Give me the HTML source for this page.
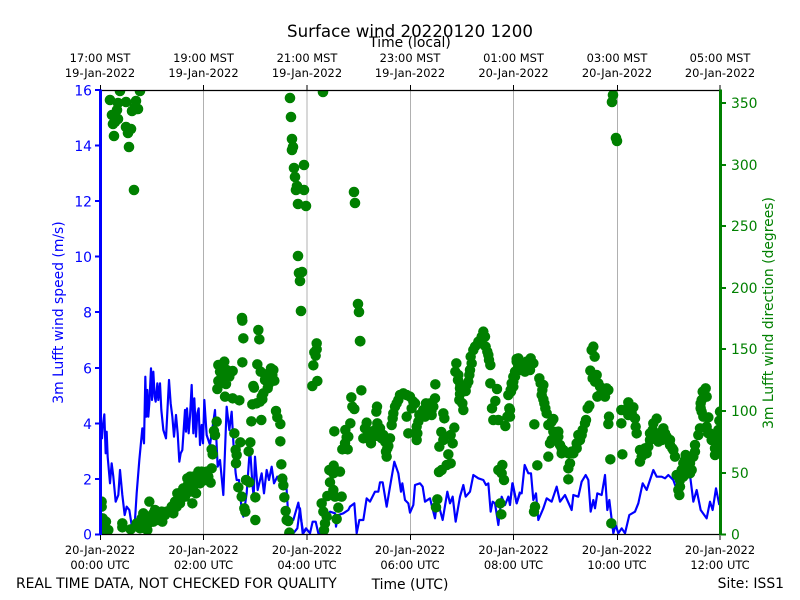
<!DOCTYPE html>
<html><head><meta charset="utf-8"><style>
html,body{margin:0;padding:0;background:#fff;width:800px;height:600px;overflow:hidden}
svg{display:block}
text{font-family:"DejaVu Sans",sans-serif;fill:#000}
.s{font-size:11.45px;text-anchor:middle}
.l{font-size:13.9px;fill:#00f;text-anchor:end}
.r{font-size:13.9px;fill:#008000}
</style></head><body>
<svg width="800" height="600" viewBox="0 0 800 600" xmlns="http://www.w3.org/2000/svg">
<defs><clipPath id="c"><rect x="100" y="90" width="620" height="444.5"/></clipPath></defs>
<rect width="800" height="600" fill="#fff"/>
<path d="M203.5 90V534M307 90V534M410.5 90V534M513.5 90V534M617.5 90V534" stroke="#b0b0b0" stroke-width="1" fill="none"/>
<g clip-path="url(#c)">
<g transform="translate(90,320) scale(.33333)" fill="none" stroke="#00f" stroke-width="6.5" stroke-linejoin="round">
<polyline points="31,310 36,355 38,320 43,283 47,400 50,335 53,410 60,490 65,430 70,470 77,545 85,525 90,450 97,525 104,585 110,560 118,570 125,615 135,600 140,520 148,420 157,325 162,370 166,170 169,290 172,210 175,290 178,250 183,145 186,240 190,155 194,230 197,245 202,190 205,240 210,190 214,270 220,330 228,355 237,180 242,250 247,290 252,350 258,285 263,340 268,425 272,400 277,390 285,270 288,335 291,265 296,340 300,290 305,195 310,340 313,235 318,350 322,280 326,265 330,375 335,315 339,370 343,240 350,345 360,375 375,270 383,440 390,420 400,525 410,260 418,330 425,275 432,400 437,460 440,480 447,480 455,570 460,590 470,520 475,450 480,380 487,490 491,530 495,410 503,510 515,460 522,520 530,450 537,480 545,440 552,490 562,470 570,480 588,480 595,590 610,600 625,548 640,640 650,625"/>
</g>
<g transform="translate(300,320) scale(.33333)" fill="none" stroke="#00f" stroke-width="6.5" stroke-linejoin="round">
<polyline points="-30,625 -20,640 -8,625 0,565 8,640 18,625 30,640 38,605 47,605 55,640 70,640 80,590 90,575 105,580 108,620 115,585 130,580 145,570 150,560 163,550 170,640 178,600 190,600 200,535 210,545 225,515 235,515 240,487 248,487 260,560 270,500 283,425 295,460 303,515 307,490 315,540 325,550 330,578 340,555 345,495 360,490 368,500 375,545 390,535 405,595 412,540 428,600 442,515 450,550 458,530 467,605 480,530 490,495 497,530 510,515 520,465 535,475 550,480 558,495 565,490 572,575 578,545 585,550 595,615 605,530 615,555 625,530 630,555 637,490 650,550 660,515"/>
</g>
<g transform="translate(510,320) scale(.33333)" fill="none" stroke="#00f" stroke-width="6.5" stroke-linejoin="round">
<polyline points="0,550 8,490 20,550 30,520 35,520 44,435 55,460 63,460 70,540 78,520 85,600 100,565 110,535 125,545 140,500 150,545 165,525 185,570 190,525 205,530 215,485 227,465 235,480 242,575 250,540 255,565 262,520 275,525 285,465 292,570 298,540 310,640 317,615 325,640 335,625 345,640 358,585 375,575 385,550 398,490 410,510 430,450 440,470 455,470 465,475 475,465 490,480 497,500 510,480 525,480 540,465 550,545 560,510 572,570 590,595 600,545 608,570 618,505 628,555"/>
</g>
<g fill="none" stroke="#008000" stroke-width="10.6" stroke-linecap="round">
<path d="M120 91h0M140 91h0M110 100h0M118 103h0M126 102h0M136 101h0M135 107h0M138 109h0M132 111h0M117 110h0M112 115h0M118 119h0M113 124h0M115 122h0M126 127h0M131 129h0M128 133h0M114 136h0M129 147h0M134 190h0M290 98h0M291 117h0M292 139h0M293 147h0M292 150h0M304 165h0M294 168h0M295 177h0M297 186h0M296 190h0M304 190h0M298 204h0M306 206h0M298 256h0M302 272h0M299 273h0M300 281h0M301 311h0M242 318h0M323 92h0M613 95h0M612 102h0M616 138h0M617 141h0M354 192h0M355 203h0M358 304h0M359 312h0M360 341h0"/>
</g>
<g transform="translate(90,320) scale(.33333)" fill="none" stroke="#008000" stroke-width="31.5" stroke-linecap="round">
<path d="M35 545h0M35 560h0M38 595h0M48 605h0M40 625h0M55 630h0M30 635h0M97 610h0M97 622h0M122 628h0M140 610h0M150 625h0M172 630h0M160 580h0M178 545h0M165 600h0M180 590h0M195 570h0M205 590h0M217 605h0M230 575h0M250 580h0M255 545h0M262 520h0M270 550h0M280 505h0M292 475h0M300 515h0M310 500h0M307 550h0M318 520h0M325 455h0M335 455h0M330 470h0M345 480h0M362 488h0M365 445h0M350 455h0M320 480h0M290 500h0M305 490h0M270 530h0M240 570h0M215 575h0M190 580h0M175 610h0M160 600h0M150 610h0M200 600h0M225 585h0M260 560h0M275 520h0M285 530h0M295 490h0M310 470h0M340 465h0M355 470h0M330 490h0M245 560h0M190 605h0M170 590h0M155 595h0M300 470h0M380 305h0M372 333h0M375 345h0M365 388h0M368 403h0M433 340h0M437 390h0M440 405h0M438 430h0M451 367h0M481 367h0M476 394h0M445 502h0M455 530h0M468 480h0M478 487h0M463 565h0M466 575h0M496 532h0M496 600h0M574 433h0M577 476h0M580 496h0M583 532h0M587 573h0M590 600h0M595 603h0M598 638h0M571 364h0M571 312h0M562 292h0M558 273h0M484 304h0M514 300h0M457 2h0M505 30h0M508 58h0M460 55h0M457 127h0M403 125h0M385 135h0M390 155h0M410 150h0M428 153h0M418 170h0M400 175h0M385 183h0M408 192h0M382 207h0M405 230h0M428 235h0M448 241h0M487 253h0M500 250h0M517 238h0M520 220h0M533 205h0M490 198h0M492 203h0M502 133h0M512 155h0M525 165h0M543 145h0M547 165h0M553 182h0M535 180h0M395 165h0M410 165h0M400 140h0M415 160h0M395 185h0M525 180h0M535 195h0M540 155h0M550 150h0M530 170h0M515 230h0M510 245h0"/>
</g>
<g transform="translate(300,320) scale(.33333)" fill="none" stroke="#008000" stroke-width="31.5" stroke-linecap="round">
<path d="M50 70h0M50 88h0M43 97h0M47 107h0M40 136h0M52 183h0M37 198h0M181 64h0M184 211h0M154 232h0M157 260h0M163 267h0M231 260h0M229 275h0M103 334h0M151 310h0M136 330h0M140 352h0M145 350h0M135 370h0M127 388h0M143 388h0M200 308h0M195 325h0M190 355h0M205 340h0M213 370h0M232 310h0M240 325h0M250 345h0M270 355h0M265 378h0M258 395h0M260 410h0M235 340h0M220 350h0M310 220h0M330 230h0M345 250h0M335 265h0M320 290h0M295 240h0M285 260h0M278 295h0M275 315h0M325 340h0M350 320h0M352 340h0M350 360h0M358 285h0M370 270h0M378 250h0M395 285h0M405 235h0M400 260h0M406 193h0M430 280h0M433 295h0M424 336h0M418 380h0M430 360h0M463 323h0M452 345h0M458 370h0M445 403h0M452 430h0M440 435h0M425 450h0M417 456h0M469 130h0M466 155h0M474 180h0M481 195h0M497 213h0M480 222h0M478 240h0M487 250h0M490 270h0M500 195h0M508 165h0M515 130h0M520 90h0M540 70h0M550 35h0M555 50h0M562 95h0M567 120h0M571 135h0M571 190h0M591 207h0M586 243h0M576 265h0M580 300h0M595 300h0M616 318h0M622 290h0M628 265h0M632 210h0M640 185h0M650 155h0M650 117h0M101 437h0M88 450h0M120 455h0M100 460h0M90 487h0M100 510h0M125 530h0M82 528h0M105 530h0M115 563h0M65 550h0M70 575h0M80 590h0M75 610h0M72 630h0M110 597h0M412 538h0M408 562h0M601 550h0M604 583h0M607 435h0M595 450h0M605 460h0M612 480h0M300 225h0M290 250h0M320 225h0M340 245h0M280 280h0M345 340h0M355 305h0M365 280h0M385 265h0M375 290h0M390 250h0M395 270h0M200 330h0M215 335h0M225 330h0M240 345h0M245 355h0M255 365h0M262 385h0M210 360h0M200 350h0M480 205h0M490 205h0M475 165h0M505 185h0M510 150h0M512 110h0M525 80h0M535 65h0M545 50h0M557 80h0M565 105h0M640 200h0M645 170h0M655 140h0M625 225h0"/>
</g>
<g transform="translate(510,320) scale(.33333)" fill="none" stroke="#008000" stroke-width="31.5" stroke-linecap="round">
<path d="M250 80h0M245 90h0M254 110h0M241 152h0M260 165h0M265 190h0M290 205h0M295 210h0M285 230h0M262 230h0M238 257h0M233 265h0M297 290h0M295 312h0M334 310h0M334 270h0M355 247h0M370 262h0M355 285h0M375 295h0M377 320h0M380 340h0M301 418h0M337 403h0M304 610h0M440 296h0M430 310h0M460 325h0M445 365h0M480 360h0M490 390h0M495 410h0M420 340h0M410 400h0M390 390h0M390 425h0M500 465h0M510 500h0M508 525h0M527 405h0M520 430h0M545 450h0M530 460h0M555 375h0M565 345h0M570 325h0M595 292h0M575 275h0M572 250h0M590 230h0M587 205h0M578 215h0M600 340h0M615 405h0M625 330h0M628 302h0M630 275h0M25 115h0M62 115h0M70 130h0M50 150h0M35 150h0M15 155h0M5 190h0M3 215h0M0 270h0M0 290h0M88 175h0M100 195h0M95 225h0M103 250h0M110 280h0M73 313h0M115 315h0M130 297h0M145 335h0M135 355h0M120 370h0M115 410h0M82 436h0M155 385h0M175 400h0M205 345h0M200 385h0M180 430h0M175 445h0M175 478h0M225 310h0M75 560h0M72 575h0M10 170h0M25 140h0M40 130h0M55 140h0M45 155h0M60 150h0M20 125h0M50 125h0M92 190h0M97 210h0M100 238h0M106 265h0M125 305h0M130 335h0M145 350h0M125 360h0M150 375h0M165 395h0M185 395h0M200 370h0M210 360h0M218 330h0M228 300h0M215 345h0M190 400h0M160 390h0M155 400h0M248 175h0M255 185h0M270 200h0M280 210h0M270 225h0M415 380h0M420 360h0M428 330h0M440 340h0M450 345h0M465 340h0M470 350h0M455 360h0M480 375h0M487 385h0M405 385h0M395 410h0M530 440h0M525 420h0M540 430h0M550 410h0M555 395h0M515 450h0M510 480h0M540 460h0M520 470h0M505 510h0M590 320h0M595 340h0M605 360h0M615 385h0M625 360h0M620 345h0M618 375h0M572 265h0M580 290h0M575 240h0M355 260h0M365 280h0"/>
</g>
</g>
<path d="M100 90.5H720M100 534.5H720" stroke="#000" stroke-width="1.2" fill="none"/>
<path d="M100.5 90V85M203.5 90V85M307 90V85M410.5 90V85M513.5 90V85M617.5 90V85M720 90V85M100.5 535V540M203.5 535V540M307 535V540M410.5 535V540M513.5 535V540M617.5 535V540M720 535V540" stroke="#000" stroke-width="1" fill="none"/>
<path d="M100.5 89.5V535" stroke="#00f" stroke-width="3" fill="none"/>
<path d="M720.5 89.5V535" stroke="#008000" stroke-width="3" fill="none"/>
<path d="M95 534.5H100M95 479H100M95 423.5H100M95 368H100M95 312H100M95 256.5H100M95 201H100M95 145.5H100M95 90H100" stroke="#00f" stroke-width="2" fill="none"/>
<path d="M721 534.5H726M721 473H726M721 411H726M721 349H726M721 288H726M721 226H726M721 165H726M721 103H726" stroke="#008000" stroke-width="2" fill="none"/>
<text x="92" y="539.5" class="l">0</text>
<text x="92" y="484.5" class="l">2</text>
<text x="92" y="429" class="l">4</text>
<text x="92" y="373.5" class="l">6</text>
<text x="92" y="317.5" class="l">8</text>
<text x="92" y="262" class="l">10</text>
<text x="92" y="206.5" class="l">12</text>
<text x="92" y="151" class="l">14</text>
<text x="92" y="95.5" class="l">16</text>
<text x="731" y="539.5" class="r">0</text>
<text x="731" y="478" class="r">50</text>
<text x="731" y="416" class="r">100</text>
<text x="731" y="354" class="r">150</text>
<text x="731" y="293" class="r">200</text>
<text x="731" y="231" class="r">250</text>
<text x="731" y="170" class="r">300</text>
<text x="731" y="108" class="r">350</text>
<text x="410" y="37" font-size="16.67" text-anchor="middle">Surface wind 20220120 1200</text>
<text x="410" y="47" font-size="13.9" text-anchor="middle">Time (local)</text>
<text x="100" y="62" class="s">17:00 MST</text><text x="100" y="77" class="s">19-Jan-2022</text>
<text x="203.5" y="62" class="s">19:00 MST</text><text x="203.5" y="77" class="s">19-Jan-2022</text>
<text x="307" y="62" class="s">21:00 MST</text><text x="307" y="77" class="s">19-Jan-2022</text>
<text x="410" y="62" class="s">23:00 MST</text><text x="410" y="77" class="s">19-Jan-2022</text>
<text x="513.5" y="62" class="s">01:00 MST</text><text x="513.5" y="77" class="s">20-Jan-2022</text>
<text x="617" y="62" class="s">03:00 MST</text><text x="617" y="77" class="s">20-Jan-2022</text>
<text x="720" y="62" class="s">05:00 MST</text><text x="720" y="77" class="s">20-Jan-2022</text>
<text x="100" y="554" class="s">20-Jan-2022</text><text x="100" y="569" class="s">00:00 UTC</text>
<text x="203.5" y="554" class="s">20-Jan-2022</text><text x="203.5" y="569" class="s">02:00 UTC</text>
<text x="307" y="554" class="s">20-Jan-2022</text><text x="307" y="569" class="s">04:00 UTC</text>
<text x="410" y="554" class="s">20-Jan-2022</text><text x="410" y="569" class="s">06:00 UTC</text>
<text x="513.5" y="554" class="s">20-Jan-2022</text><text x="513.5" y="569" class="s">08:00 UTC</text>
<text x="617" y="554" class="s">20-Jan-2022</text><text x="617" y="569" class="s">10:00 UTC</text>
<text x="720" y="554" class="s">20-Jan-2022</text><text x="720" y="569" class="s">12:00 UTC</text>
<text x="16" y="588" font-size="13.9">REAL TIME DATA, NOT CHECKED FOR QUALITY</text>
<text x="410" y="589" font-size="13.9" text-anchor="middle">Time (UTC)</text>
<text x="784" y="588" font-size="13.9" text-anchor="end">Site: ISS1</text>
<text transform="translate(63,312.5) rotate(-90)" font-size="13.9" style="fill:#00f" text-anchor="middle">3m Lufft wind speed (m/s)</text>
<text transform="translate(773,313) rotate(-90)" font-size="13.9" style="fill:#008000" text-anchor="middle">3m Lufft wind direction (degrees)</text>
</svg>
</body></html>
